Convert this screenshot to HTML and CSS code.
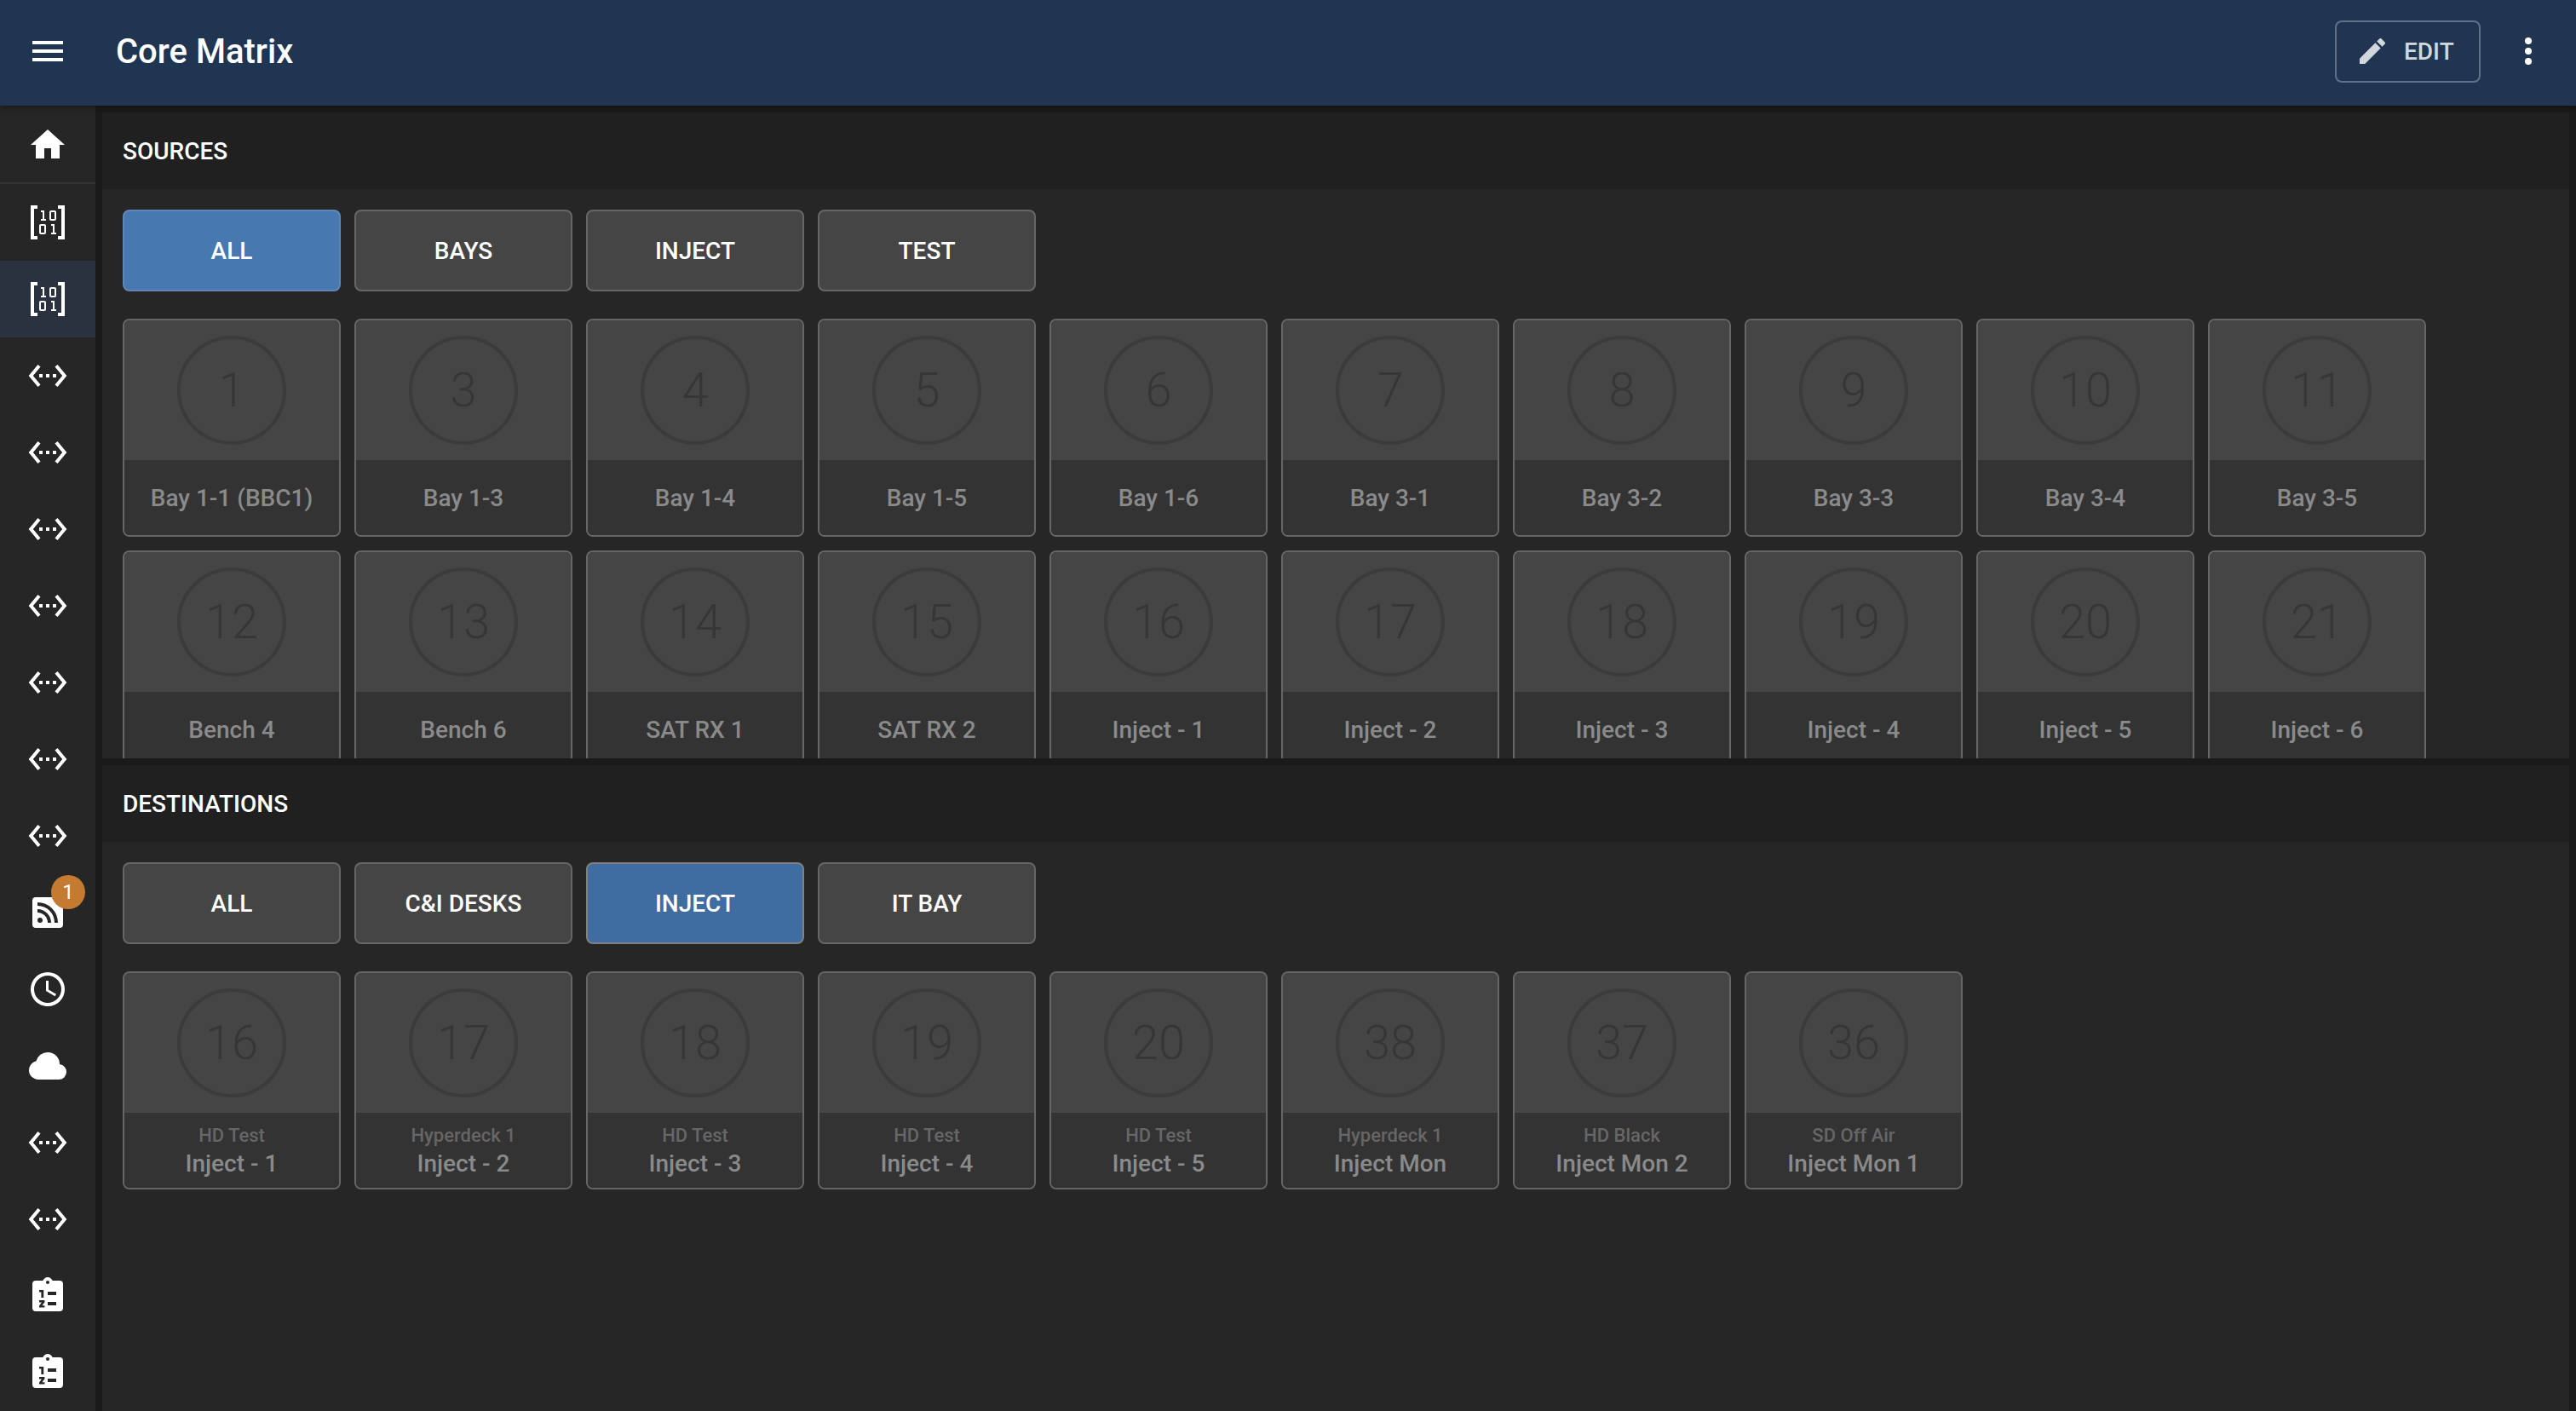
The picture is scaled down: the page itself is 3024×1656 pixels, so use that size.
FILE: index.html
```html
<!DOCTYPE html>
<html lang="en">
<head>
  <meta charset="UTF-8">
  <meta name="viewport" content="width=device-width, initial-scale=1.0">
  <title>Core Matrix</title>
  <link rel="stylesheet" href="styles.css">
</head>
<body>

<svg class="defs" aria-hidden="true">
  <symbol id="i-home" viewBox="0 0 24 24"><path d="M10,20V14H14V20H19V12H22L12,3L2,12H5V20H10Z"/></symbol>
  <symbol id="i-matrix" viewBox="0 0 24 24"><path fill-rule="evenodd" d="M2 2H6V4H4V20H6V22H2ZM22 2H18V4H20V20H18V22H22ZM8 5H10V10H11V11H8V10H9V6H8ZM14 5H16A1 1 0 0 1 17 6V10A1 1 0 0 1 16 11H14A1 1 0 0 1 13 10V6A1 1 0 0 1 14 5ZM14 6V10H16V6ZM8 13H10A1 1 0 0 1 11 14V18A1 1 0 0 1 10 19H8A1 1 0 0 1 7 18V14A1 1 0 0 1 8 13ZM8 14V18H10V14ZM14 13H16V18H17V19H14V18H15V14H14Z"/></symbol>
  <symbol id="i-ethernet" viewBox="0 0 24 24"><path d="M7.77 6.76L6.23 5.48.82 12l5.41 6.52 1.54-1.28L3.42 12l4.35-5.24zM7 13h2v-2H7v2zm10-2h-2v2h2v-2zm-6 2h2v-2h-2v2zm6.77-7.52l-1.54 1.28L20.58 12l-4.35 5.24 1.54 1.28L23.18 12l-5.41-6.52z"/></symbol>
  <symbol id="i-rss" viewBox="0 0 24 24"><path fill-rule="evenodd" d="M5,3H19A2,2 0 0,1 21,5V19A2,2 0 0,1 19,21H5A2,2 0 0,1 3,19V5A2,2 0 0,1 5,3M7.5,15A1.5,1.5 0 0,0 6,16.5A1.5,1.5 0 0,0 7.5,18A1.5,1.5 0 0,0 9,16.5A1.5,1.5 0 0,0 7.5,15M6,10V12A6,6 0 0,1 12,18H14A8,8 0 0,0 6,10M6,6V8A10,10 0 0,1 16,18H18A12,12 0 0,0 6,6Z"/></symbol>
  <symbol id="i-clock" viewBox="0 0 24 24"><path d="M12,20A8,8 0 0,0 20,12A8,8 0 0,0 12,4A8,8 0 0,0 4,12A8,8 0 0,0 12,20M12,2A10,10 0 0,1 22,12A10,10 0 0,1 12,22C6.47,22 2,17.5 2,12A10,10 0 0,1 12,2M12.5,7V12.25L17,14.92L16.25,16.15L11,13V7H12.5Z"/></symbol>
  <symbol id="i-cloud" viewBox="0 0 24 24"><path d="M6.5 20Q4.22 20 2.61 18.43 1 16.85 1 14.58 1 12.63 2.17 11.1 3.35 9.57 5.25 9.15 5.88 6.85 7.75 5.43 9.63 4 12 4 14.93 4 16.96 6.04 19 8.07 19 11 20.73 11.2 21.86 12.5 23 13.78 23 15.5 23 17.38 21.69 18.69 20.38 20 18.5 20Z"/></symbol>
  <symbol id="i-list" viewBox="0 0 24 24"><path fill-rule="evenodd" d="M19,3H14.82C14.4,1.84 13.3,1 12,1C10.7,1 9.6,1.84 9.18,3H5A2,2 0 0,0 3,5V19A2,2 0 0,0 5,21H19A2,2 0 0,0 21,19V5A2,2 0 0,0 19,3ZM12,3A1,1 0 0,1 13,4A1,1 0 0,1 12,5A1,1 0 0,1 11,4A1,1 0 0,1 12,3ZM7 8.5H9.6V13H8.2V9.7H7ZM12 9.5H17V11.5H12ZM7 14.5H10.2V15.6L8.7 17.6H10.2V18.8H7V17.7L8.5 15.7H7ZM12 15.5H17V17.5H12Z"/></symbol>
</svg>

<header class="topbar">
  <svg class="icon menu-icon" viewBox="0 0 24 24"><path d="M3,6H21V8H3V6M3,11H21V13H3V11M3,16H21V18H3V16Z"/></svg>
  <div class="app-title">Core Matrix</div>
  <button class="edit-btn" type="button">
    <svg class="edit-icon" viewBox="0 0 24 24"><path d="M20.71,7.04C21.1,6.65 21.1,6 20.71,5.63L18.37,3.29C18,2.9 17.35,2.9 16.96,3.29L15.12,5.12L18.87,8.87M3,17.25V21H6.75L17.81,9.93L14.06,6.18L3,17.25Z"/></svg>
    EDIT
  </button>
  <svg class="icon more-icon" viewBox="0 0 24 24"><path d="M12,16A2,2 0 0,1 14,18A2,2 0 0,1 12,20A2,2 0 0,1 10,18A2,2 0 0,1 12,16M12,10A2,2 0 0,1 14,12A2,2 0 0,1 12,14A2,2 0 0,1 10,12A2,2 0 0,1 12,10M12,4A2,2 0 0,1 14,6A2,2 0 0,1 12,8A2,2 0 0,1 10,6A2,2 0 0,1 12,4Z"/></svg>
</header>

<div class="layout">
  <nav class="sidebar">
    <a class="nav-item nav-home"><svg class="icon"><use href="#i-home"/></svg></a>
    <a class="nav-item"><svg class="icon"><use href="#i-matrix"/></svg></a>
    <a class="nav-item active"><svg class="icon"><use href="#i-matrix"/></svg></a>
    <a class="nav-item"><svg class="icon"><use href="#i-ethernet"/></svg></a>
    <a class="nav-item"><svg class="icon"><use href="#i-ethernet"/></svg></a>
    <a class="nav-item"><svg class="icon"><use href="#i-ethernet"/></svg></a>
    <a class="nav-item"><svg class="icon"><use href="#i-ethernet"/></svg></a>
    <a class="nav-item"><svg class="icon"><use href="#i-ethernet"/></svg></a>
    <a class="nav-item"><svg class="icon"><use href="#i-ethernet"/></svg></a>
    <a class="nav-item"><svg class="icon"><use href="#i-ethernet"/></svg></a>
    <a class="nav-item"><svg class="icon"><use href="#i-rss"/></svg><span class="badge">1</span></a>
    <a class="nav-item"><svg class="icon"><use href="#i-clock"/></svg></a>
    <a class="nav-item"><svg class="icon"><use href="#i-cloud"/></svg></a>
    <a class="nav-item"><svg class="icon"><use href="#i-ethernet"/></svg></a>
    <a class="nav-item"><svg class="icon"><use href="#i-ethernet"/></svg></a>
    <a class="nav-item"><svg class="icon"><use href="#i-list"/></svg></a>
    <a class="nav-item"><svg class="icon"><use href="#i-list"/></svg></a>
  </nav>

  <main class="content">
    <section class="panel panel-sources">
      <h2 class="panel-head">SOURCES</h2>
      <div class="panel-body">
        <div class="groups">
          <button class="group-btn selected" type="button">ALL</button>
          <button class="group-btn" type="button">BAYS</button>
          <button class="group-btn" type="button">INJECT</button>
          <button class="group-btn" type="button">TEST</button>
        </div>
        <div class="tiles">
          <div class="tile"><div class="tile-top"><span class="num">1</span></div><div class="tile-label"><span class="name">Bay 1-1 (BBC1)</span></div></div>
          <div class="tile"><div class="tile-top"><span class="num">3</span></div><div class="tile-label"><span class="name">Bay 1-3</span></div></div>
          <div class="tile"><div class="tile-top"><span class="num">4</span></div><div class="tile-label"><span class="name">Bay 1-4</span></div></div>
          <div class="tile"><div class="tile-top"><span class="num">5</span></div><div class="tile-label"><span class="name">Bay 1-5</span></div></div>
          <div class="tile"><div class="tile-top"><span class="num">6</span></div><div class="tile-label"><span class="name">Bay 1-6</span></div></div>
          <div class="tile"><div class="tile-top"><span class="num">7</span></div><div class="tile-label"><span class="name">Bay 3-1</span></div></div>
          <div class="tile"><div class="tile-top"><span class="num">8</span></div><div class="tile-label"><span class="name">Bay 3-2</span></div></div>
          <div class="tile"><div class="tile-top"><span class="num">9</span></div><div class="tile-label"><span class="name">Bay 3-3</span></div></div>
          <div class="tile"><div class="tile-top"><span class="num">10</span></div><div class="tile-label"><span class="name">Bay 3-4</span></div></div>
          <div class="tile"><div class="tile-top"><span class="num">11</span></div><div class="tile-label"><span class="name">Bay 3-5</span></div></div>
          <div class="tile"><div class="tile-top"><span class="num">12</span></div><div class="tile-label"><span class="name">Bench 4</span></div></div>
          <div class="tile"><div class="tile-top"><span class="num">13</span></div><div class="tile-label"><span class="name">Bench 6</span></div></div>
          <div class="tile"><div class="tile-top"><span class="num">14</span></div><div class="tile-label"><span class="name">SAT RX 1</span></div></div>
          <div class="tile"><div class="tile-top"><span class="num">15</span></div><div class="tile-label"><span class="name">SAT RX 2</span></div></div>
          <div class="tile"><div class="tile-top"><span class="num">16</span></div><div class="tile-label"><span class="name">Inject - 1</span></div></div>
          <div class="tile"><div class="tile-top"><span class="num">17</span></div><div class="tile-label"><span class="name">Inject - 2</span></div></div>
          <div class="tile"><div class="tile-top"><span class="num">18</span></div><div class="tile-label"><span class="name">Inject - 3</span></div></div>
          <div class="tile"><div class="tile-top"><span class="num">19</span></div><div class="tile-label"><span class="name">Inject - 4</span></div></div>
          <div class="tile"><div class="tile-top"><span class="num">20</span></div><div class="tile-label"><span class="name">Inject - 5</span></div></div>
          <div class="tile"><div class="tile-top"><span class="num">21</span></div><div class="tile-label"><span class="name">Inject - 6</span></div></div>
        </div>
      </div>
    </section>

    <section class="panel panel-dests">
      <h2 class="panel-head">DESTINATIONS</h2>
      <div class="panel-body">
        <div class="groups">
          <button class="group-btn" type="button">ALL</button>
          <button class="group-btn" type="button">C&amp;I DESKS</button>
          <button class="group-btn selected" type="button">INJECT</button>
          <button class="group-btn" type="button">IT BAY</button>
        </div>
        <div class="tiles">
          <div class="tile"><div class="tile-top"><span class="num">16</span></div><div class="tile-label"><span class="route">HD Test</span><span class="name">Inject - 1</span></div></div>
          <div class="tile"><div class="tile-top"><span class="num">17</span></div><div class="tile-label"><span class="route">Hyperdeck 1</span><span class="name">Inject - 2</span></div></div>
          <div class="tile"><div class="tile-top"><span class="num">18</span></div><div class="tile-label"><span class="route">HD Test</span><span class="name">Inject - 3</span></div></div>
          <div class="tile"><div class="tile-top"><span class="num">19</span></div><div class="tile-label"><span class="route">HD Test</span><span class="name">Inject - 4</span></div></div>
          <div class="tile"><div class="tile-top"><span class="num">20</span></div><div class="tile-label"><span class="route">HD Test</span><span class="name">Inject - 5</span></div></div>
          <div class="tile"><div class="tile-top"><span class="num">38</span></div><div class="tile-label"><span class="route">Hyperdeck 1</span><span class="name">Inject Mon</span></div></div>
          <div class="tile"><div class="tile-top"><span class="num">37</span></div><div class="tile-label"><span class="route">HD Black</span><span class="name">Inject Mon 2</span></div></div>
          <div class="tile"><div class="tile-top"><span class="num">36</span></div><div class="tile-label"><span class="route">SD Off Air</span><span class="name">Inject Mon 1</span></div></div>
        </div>
      </div>
    </section>
  </main>
</div>

</body>
</html>
```

FILE: styles.css
```css
* {
  box-sizing: border-box;
}

html, body {
  height: 100%;
}

body {
  margin: 0;
  display: flex;
  flex-direction: column;
  overflow: hidden;
  background: #1a1a1a;
  color: #fff;
  font-family: Roboto, "Noto Sans", sans-serif;
}

.defs {
  display: none;
}

.icon {
  width: 48px;
  height: 48px;
  fill: #fff;
  flex: none;
}

/* top bar */
.topbar {
  height: 124px;
  flex: none;
  display: flex;
  align-items: center;
  padding: 0 32px 4px;
  background: #1f3552;
  box-shadow: 0 2px 8px rgba(0, 0, 0, 0.4);
  position: relative;
  z-index: 2;
}

.menu-icon {
  margin-right: 56px;
}

.app-title {
  font-size: 40px;
  font-weight: 500;
  flex: 1;
}

.edit-btn {
  width: 171px;
  height: 73px;
  display: flex;
  align-items: center;
  padding: 0 0 0 22px;
  border: 2px solid rgba(255, 255, 255, 0.3);
  border-radius: 8px;
  background: transparent;
  color: #d2d7dc;
  font-family: inherit;
  font-size: 28px;
  font-weight: 500;
}

.edit-icon {
  width: 40px;
  height: 40px;
  margin-right: 17px;
  fill: #d2d7dc;
}

.more-icon {
  margin-left: 32px;
}

/* sidebar */
.layout {
  flex: 1;
  display: flex;
  min-height: 0;
}

.sidebar {
  width: 112px;
  flex: none;
  padding-top: 2px;
  background: #262626;
}

.nav-item {
  height: 90px;
  display: flex;
  align-items: center;
  justify-content: center;
  position: relative;
}

.nav-home {
  border-bottom: 2px solid #333;
}

.nav-item.active {
  background: #2a3240;
}

.badge {
  position: absolute;
  top: 1px;
  left: 60px;
  width: 40px;
  height: 40px;
  border-radius: 50%;
  background: #c47a30;
  display: flex;
  align-items: center;
  justify-content: center;
  font-size: 24px;
}

/* panels */
.content {
  flex: 1;
  min-width: 0;
  display: flex;
  flex-direction: column;
  gap: 8px;
  padding: 8px 8px 0;
}

.panel {
  display: flex;
  flex-direction: column;
  overflow: hidden;
  background: #262626;
}

.panel-sources {
  height: 758px;
  flex: none;
}

.panel-dests {
  flex: 1;
}

.panel-head {
  height: 90px;
  flex: none;
  display: flex;
  align-items: center;
  margin: 0;
  padding: 0 24px;
  background: #202020;
  font-size: 28px;
  font-weight: 500;
}

.panel-body {
  padding: 24px;
}

.groups {
  display: flex;
  gap: 16px;
  margin-bottom: 32px;
}

.group-btn {
  width: 256px;
  height: 96px;
  border: 2px solid #666;
  border-radius: 8px;
  background: #454545;
  color: #fff;
  font-family: inherit;
  font-size: 28px;
  font-weight: 500;
}

.group-btn.selected {
  background: #4878b0;
  border-color: #5f88b8;
}

.panel-dests .group-btn.selected {
  background: #3f6ca1;
  border-color: #808080;
}

.tiles {
  display: grid;
  grid-template-columns: repeat(auto-fill, 256px);
  grid-auto-rows: 256px;
  gap: 16px;
}

.tile {
  display: flex;
  flex-direction: column;
  overflow: hidden;
  border: 2px solid #666;
  border-radius: 8px;
}

.tile-top {
  height: 164px;
  flex: none;
  display: flex;
  align-items: center;
  justify-content: center;
  background: #454545;
}

.num {
  width: 128px;
  height: 128px;
  display: flex;
  align-items: center;
  justify-content: center;
  margin-top: -1px;
  border: 4px solid #3b3b3b;
  border-radius: 50%;
  color: #363636;
  font-size: 56px;
  font-weight: 300;
}

.tile-label {
  flex: 1;
  display: flex;
  flex-direction: column;
  align-items: center;
  justify-content: center;
  background: #333;
}

.name {
  color: #8a8a8a;
  font-size: 28px;
  font-weight: 500;
}

.route {
  margin-top: 4px;
  color: #666;
  font-size: 22px;
  font-weight: 500;
  line-height: 28px;
}

.route + .name {
  line-height: 38px;
}
```
